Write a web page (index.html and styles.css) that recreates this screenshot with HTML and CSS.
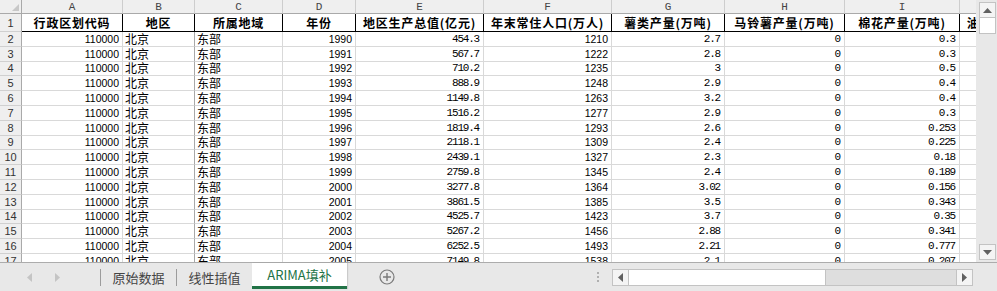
FILE: index.html
```html
<!DOCTYPE html>
<html lang="zh-CN">
<head>
<meta charset="utf-8">
<title>ARIMA填补</title>
<link rel="stylesheet" href="styles.css">
</head>
<body>
<div class="app">
  <div class="sheet">
    <div class="grid-wrap">
      <div class="grid">
        <div class="corner"><span class="tri"></span></div>
        <div class="ch">A</div><div class="ch">B</div><div class="ch">C</div><div class="ch">D</div><div class="ch">E</div><div class="ch">F</div><div class="ch">G</div><div class="ch">H</div><div class="ch">I</div><div class="ch">J</div>

        <div class="rh r1">1</div><div class="c hd">行政区划代码</div><div class="c hd">地区</div><div class="c hd">所属地域</div><div class="c hd">年份</div><div class="c hd">地区生产总值(亿元)</div><div class="c hd">年末常住人口(万人)</div><div class="c hd">薯类产量(万吨)</div><div class="c hd">马铃薯产量(万吨)</div><div class="c hd">棉花产量(万吨)</div><div class="c hd">油料产量(万吨)</div>

        <div class="rh">2</div><div class="c n">110000</div><div class="c t bd">北京</div><div class="c t">东部</div><div class="c n">1990</div><div class="c m">454.3</div><div class="c n">1210</div><div class="c m">2.7</div><div class="c m">0</div><div class="c m">0.3</div><div class="c"></div>
        <div class="rh">3</div><div class="c n">110000</div><div class="c t bd">北京</div><div class="c t">东部</div><div class="c n">1991</div><div class="c m">567.7</div><div class="c n">1222</div><div class="c m">2.8</div><div class="c m">0</div><div class="c m">0.3</div><div class="c"></div>
        <div class="rh">4</div><div class="c n">110000</div><div class="c t bd">北京</div><div class="c t">东部</div><div class="c n">1992</div><div class="c m">710.2</div><div class="c n">1235</div><div class="c m">3</div><div class="c m">0</div><div class="c m">0.5</div><div class="c"></div>
        <div class="rh">5</div><div class="c n">110000</div><div class="c t bd">北京</div><div class="c t">东部</div><div class="c n">1993</div><div class="c m">888.9</div><div class="c n">1248</div><div class="c m">2.9</div><div class="c m">0</div><div class="c m">0.4</div><div class="c"></div>
        <div class="rh">6</div><div class="c n">110000</div><div class="c t bd">北京</div><div class="c t">东部</div><div class="c n">1994</div><div class="c m">1149.8</div><div class="c n">1263</div><div class="c m">3.2</div><div class="c m">0</div><div class="c m">0.4</div><div class="c"></div>
        <div class="rh">7</div><div class="c n">110000</div><div class="c t bd">北京</div><div class="c t">东部</div><div class="c n">1995</div><div class="c m">1516.2</div><div class="c n">1277</div><div class="c m">2.9</div><div class="c m">0</div><div class="c m">0.3</div><div class="c"></div>
        <div class="rh">8</div><div class="c n">110000</div><div class="c t bd">北京</div><div class="c t">东部</div><div class="c n">1996</div><div class="c m">1819.4</div><div class="c n">1293</div><div class="c m">2.6</div><div class="c m">0</div><div class="c m">0.253</div><div class="c"></div>
        <div class="rh">9</div><div class="c n">110000</div><div class="c t bd">北京</div><div class="c t">东部</div><div class="c n">1997</div><div class="c m">2118.1</div><div class="c n">1309</div><div class="c m">2.4</div><div class="c m">0</div><div class="c m">0.225</div><div class="c"></div>
        <div class="rh">10</div><div class="c n">110000</div><div class="c t bd">北京</div><div class="c t">东部</div><div class="c n">1998</div><div class="c m">2439.1</div><div class="c n">1327</div><div class="c m">2.3</div><div class="c m">0</div><div class="c m">0.18</div><div class="c"></div>
        <div class="rh">11</div><div class="c n">110000</div><div class="c t bd">北京</div><div class="c t">东部</div><div class="c n">1999</div><div class="c m">2759.8</div><div class="c n">1345</div><div class="c m">2.4</div><div class="c m">0</div><div class="c m">0.189</div><div class="c"></div>
        <div class="rh">12</div><div class="c n">110000</div><div class="c t bd">北京</div><div class="c t">东部</div><div class="c n">2000</div><div class="c m">3277.8</div><div class="c n">1364</div><div class="c m">3.02</div><div class="c m">0</div><div class="c m">0.156</div><div class="c"></div>
        <div class="rh">13</div><div class="c n">110000</div><div class="c t bd">北京</div><div class="c t">东部</div><div class="c n">2001</div><div class="c m">3861.5</div><div class="c n">1385</div><div class="c m">3.5</div><div class="c m">0</div><div class="c m">0.343</div><div class="c"></div>
        <div class="rh">14</div><div class="c n">110000</div><div class="c t bd">北京</div><div class="c t">东部</div><div class="c n">2002</div><div class="c m">4525.7</div><div class="c n">1423</div><div class="c m">3.7</div><div class="c m">0</div><div class="c m">0.35</div><div class="c"></div>
        <div class="rh">15</div><div class="c n">110000</div><div class="c t bd">北京</div><div class="c t">东部</div><div class="c n">2003</div><div class="c m">5267.2</div><div class="c n">1456</div><div class="c m">2.88</div><div class="c m">0</div><div class="c m">0.341</div><div class="c"></div>
        <div class="rh">16</div><div class="c n">110000</div><div class="c t bd">北京</div><div class="c t">东部</div><div class="c n">2004</div><div class="c m">6252.5</div><div class="c n">1493</div><div class="c m">2.21</div><div class="c m">0</div><div class="c m">0.777</div><div class="c"></div>
        <div class="rh">17</div><div class="c n">110000</div><div class="c t bd">北京</div><div class="c t">东部</div><div class="c n">2005</div><div class="c m">7149.8</div><div class="c n">1538</div><div class="c m">2.1</div><div class="c m">0</div><div class="c m">0.207</div><div class="c"></div>
      </div>
    </div>
    <div class="vscroll">
      <div class="sbtn"><svg width="9" height="5" viewBox="0 0 9 5"><path d="M0 5L4.5 0L9 5Z" fill="#606060"/></svg></div>
      <div class="vthumb"></div>
      <div class="vtrack"></div>
      <div class="sbtn"><svg width="9" height="5" viewBox="0 0 9 5"><path d="M0 0L4.5 5L9 0Z" fill="#606060"/></svg></div>
    </div>
  </div>
  <div class="tabbar">
    <div class="nav">
      <svg width="5" height="9" viewBox="0 0 5 9"><path d="M5 0L0 4.5L5 9Z" fill="#c4c4c4"/></svg>
      <svg width="5" height="9" viewBox="0 0 5 9"><path d="M0 0L5 4.5L0 9Z" fill="#c4c4c4"/></svg>
    </div>
    <div class="tabs">
      <span class="sep"></span>
      <div class="tab">原始数据</div>
      <span class="sep"></span>
      <div class="tab">线性插值</div>
      <div class="tab active">ARIMA填补</div>
    </div>
    <div class="add">
      <svg width="16" height="16" viewBox="0 0 16 16"><circle cx="8" cy="8" r="7" fill="none" stroke="#7a7a7a" stroke-width="1.2"/><path d="M8 4v8M4 8h8" stroke="#7a7a7a" stroke-width="1.4"/></svg>
    </div>
    <div class="splitter"><i></i><i></i><i></i></div>
    <div class="hscroll">
      <div class="hbtn"><svg width="5" height="9" viewBox="0 0 5 9"><path d="M5 0L0 4.5L5 9Z" fill="#606060"/></svg></div>
      <div class="hthumb"></div>
      <div class="htrack"></div>
      <div class="hbtn"><svg width="5" height="9" viewBox="0 0 5 9"><path d="M0 0L5 4.5L0 9Z" fill="#606060"/></svg></div>
    </div>
  </div>
</div>
</body>
</html>
```
FILE: styles.css
```css
* { box-sizing: border-box; margin: 0; padding: 0; }
html, body { width: 997px; height: 291px; overflow: hidden; background: #fff; }
body { font-family: "Noto Sans CJK SC", sans-serif; color: #000; }

.app { display: flex; flex-direction: column; width: 997px; height: 291px; }

.sheet { display: flex; height: 263px; border-bottom: 1px solid #acacac; }
.grid-wrap { width: 976px; height: 262px; overflow: hidden; }
.grid {
  display: grid;
  grid-template-columns: 22px 101px 72px 88px 73px 128px 128px 113px 120px 115px 102px;
  grid-template-rows: 14px 18px repeat(16, 14.8px);
  width: max-content;
}

.corner {
  background: #efefef;
  border-right: 1px solid #a9a9a9;
  border-bottom: 1px solid #a9a9a9;
  display: flex;
  justify-content: flex-end;
  align-items: flex-end;
  padding: 0 2px 2px 0;
}
.tri { width: 0; height: 0; border-left: 7px solid transparent; border-bottom: 7px solid #c8c8c8; }

.ch {
  background: #efefef;
  border-right: 1px solid #cdcdcd;
  border-bottom: 1px solid #a9a9a9;
  font-family: "Liberation Mono", monospace;
  font-size: 11px;
  line-height: 12px;
  color: #444;
  display: flex;
  align-items: center;
  justify-content: center;
}

.rh {
  background: #efefef;
  border-right: 1px solid #a9a9a9;
  border-bottom: 1px solid #d0d0d0;
  font-family: "Liberation Sans", sans-serif;
  font-size: 11px;
  line-height: 12px;
  color: #333;
  display: flex;
  align-items: center;
  justify-content: center;
}

.c {
  border-right: 1px solid #d9d9d9;
  border-bottom: 1px solid #d9d9d9;
  white-space: nowrap;
  overflow: hidden;
  display: flex;
  align-items: center;
  padding: 0 3px 0 2px;
  font-size: 12px;
  line-height: 12px;
}

.hd {
  justify-content: center;
  font-weight: 700;
  letter-spacing: 0.8px;
  border-right-color: #000;
  border-bottom-color: #000;
  padding: 0;
}

.n {
  justify-content: flex-end;
  font-family: "Liberation Sans", sans-serif;
  font-size: 10.5px;
}
.m {
  justify-content: flex-end;
  font-family: "Liberation Mono", monospace;
  font-size: 11px;
  letter-spacing: -1.2px;
  padding-right: 4px;
}
.t { justify-content: flex-start; }
.bd { border-right-color: #a8a8a8; }

.vscroll {
  width: 21px;
  height: 262px;
  background: #e8e8e8;
  display: flex;
  flex-direction: column;
  align-items: center;
  padding: 2px 0 2px 1px;
}
.sbtn {
  width: 17px;
  height: 16px;
  background: #f4f4f4;
  border: 1px solid #c3c3c3;
  display: flex;
  align-items: center;
  justify-content: center;
}
.vthumb { width: 17px; height: 16px; background: #fff; border: 1px solid #c3c3c3; border-top: 0; }
.vtrack { flex: 1; }

.tabbar {
  height: 28px;
  background: #e8e8e8;
  display: flex;
  align-items: center;
}
.nav {
  width: 100px;
  display: flex;
  align-items: center;
  gap: 23px;
  padding-left: 27px;
}
.tabs { display: flex; align-items: center; height: 28px; }
.sep { width: 1px; height: 17px; background: #9c9c9c; }
.tab {
  width: 75px;
  text-align: center;
  font-size: 13px;
  line-height: 17px;
  color: #444;
}
.tab.active {
  width: 95px;
  align-self: flex-start;
  height: 26px;
  background: #fff;
  color: #217346;
  border-bottom: 3px solid #217346;
  box-shadow: 1px 0 1px rgba(0,0,0,0.12);
  padding-top: 3px;
}
.add { margin-left: 32px; display: flex; align-items: center; }
.splitter {
  margin-left: 202px;
  display: flex;
  flex-direction: column;
  gap: 2px;
  width: 2px;
}
.splitter i { width: 2px; height: 2px; background: #b0b0b0; display: block; }
.hscroll {
  margin-left: 13px;
  width: 361px;
  height: 17px;
  display: flex;
  align-items: stretch;
  border: 1px solid #c3c3c3;
  background: #dedede;
}
.hbtn {
  width: 15px;
  background: #f4f4f4;
  display: flex;
  align-items: center;
  justify-content: center;
}
.hthumb { width: 198px; background: #fff; border-left: 1px solid #c3c3c3; border-right: 1px solid #c3c3c3; }
.htrack { flex: 1; border-right: 1px solid #c3c3c3; }
```
